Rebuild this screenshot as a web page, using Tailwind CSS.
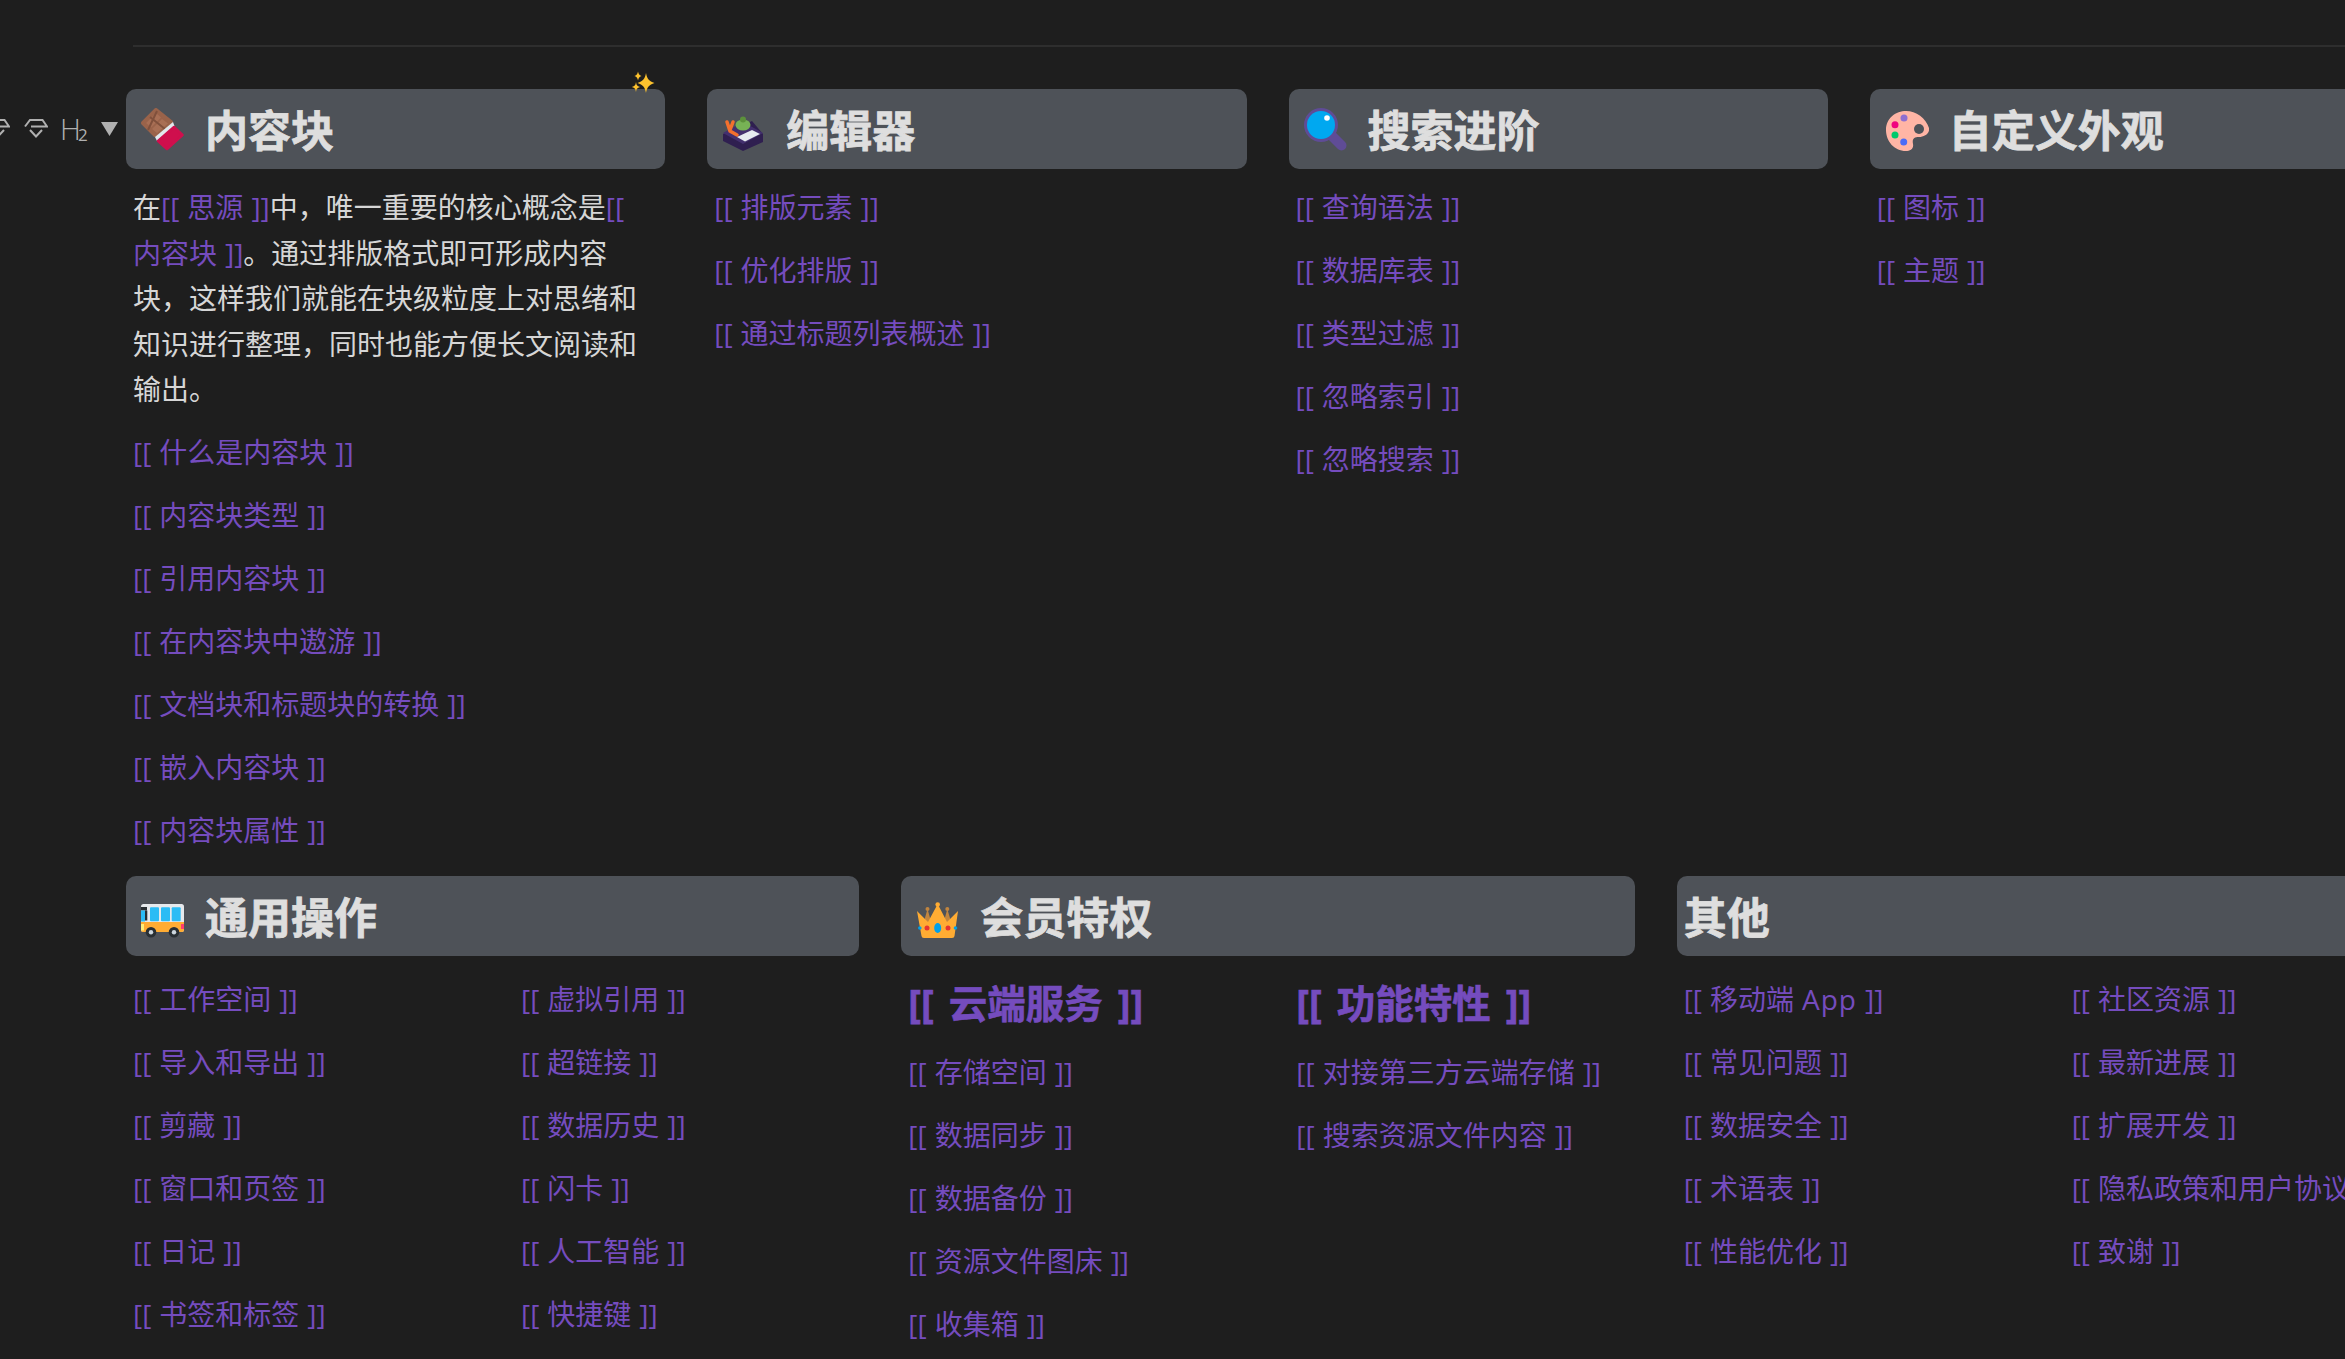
<!DOCTYPE html>
<html lang="zh-CN">
<head>
    <meta charset="UTF-8" />
    <title>思源笔记用户指南</title>
    <script src="https://cdn.jsdelivr.net/npm/@tailwindcss/browser@4"></script>
</head>
<body class="bg-[#1e1e1e]">
<div class="relative w-[2345px] h-[1359px] overflow-hidden bg-[#1e1e1e] text-[#d6d6d6] text-[28px] leading-[45.5px] whitespace-nowrap [word-spacing:0.75px] font-['Open_Sans','Noto_Sans_CJK_SC',sans-serif]">

    <!-- gutter next to the first heading -->
    <div class="absolute left-0 top-[118px] text-[#b0b0b0]">
        <svg class="absolute left-[-14px] top-[1px]" width="24" height="20" viewBox="0 0 24 20" fill="none" stroke="#b0b0b0" stroke-width="2"><path d="M1 7.5 L6 1 H18.5 L23 7.5 H7 M6 11 L12 17.5 L18 11"/></svg>
        <svg class="absolute left-[24px] top-[1px]" width="24" height="20" viewBox="0 0 24 20" fill="none" stroke="#b0b0b0" stroke-width="2"><path d="M1 7.5 L6 1 H18.5 L23 7.5 H7 M6 11 L12 17.5 L18 11"/></svg>
        <span class="absolute left-[60px] top-[-12px] text-[29px] font-light">H</span>
        <span class="absolute left-[78px] top-[-6px] text-[17px]">2</span>
        <svg class="absolute left-[101px] top-[4px]" width="17" height="14" viewBox="0 0 17 14"><polygon points="0,0 17,0 8.5,14" fill="#b0b0b0"/></svg>
    </div>

    <!-- sparkle sitting on the first heading -->
    <svg class="absolute left-[632px] top-[70px] z-10" width="24" height="28" viewBox="0 0 24 28" fill="#fdc22e">
        <path d="M14 3 C15 9 17 11 22.5 13 C17 15 15 17 14 23 C13 17 11 15 5.5 13 C11 11 13 9 14 3Z"/>
        <path d="M6 1.5 C6.5 4 7 5 9.5 6 C7 7 6.5 8 6 10.5 C5.5 8 5 7 2.5 6 C5 5 5.5 4 6 1.5Z"/>
        <path d="M4 12 C4.5 15 5 16 8 17 C5 18 4.5 19 4 22 C3.5 19 3 18 0 17 C3 16 3.5 15 4 12Z"/>
    </svg>

    <div class="ml-[126px] pt-[45px]">
        <div class="ml-[7px] h-[2px] bg-[#2e2e2e]"></div>

        <!-- first row: four columns -->
        <div class="w-[2283px] mt-[42px] grid grid-cols-4 gap-x-[42px]">
            <section>
                <h2 class="flex items-center h-[80px] rounded-[10px] bg-[#4e5258] text-[#dedede] text-[43px] font-bold">
                    <svg class="ml-[15px] mr-[21px] shrink-0" width="43" height="43" viewBox="0 0 43 43">
                        <polygon points="2,15 15,2 30,14 14,27" fill="#9a634a" stroke="#9a634a" stroke-width="4" stroke-linejoin="round"/>
                        <path d="M5 15 L15 5 L20 9.5 L10 19.5Z M11 21 L21 11 L27 15.5 L16 25Z" fill="#a86f55"/>
                        <path d="M9 9 L24 21 M16 3 L7 22" stroke="#80503c" stroke-width="2" fill="none"/>
                        <polygon points="14,29 32,14 33.5,18 16,33" fill="#e1e8ed"/>
                        <polygon points="17,33 33,19 41.5,27 26,41" fill="#cf0f4d" stroke="#cf0f4d" stroke-width="2.5" stroke-linejoin="round"/>
                    </svg>
                    <span class="mt-[4px] [-webkit-text-stroke:0.8px]">内容块</span>
                </h2>
                <div class="mt-[16px] px-[7px] space-y-[17.5px]">
                    <p>在<span class="text-[#754cbe]">[[ 思源 ]]</span>中，唯一重要的核心概念是<span class="text-[#754cbe]">[[<br>内容块 ]]</span>。通过排版格式即可形成内容<br>块，这样我们就能在块级粒度上对思绪和<br>知识进行整理，同时也能方便长文阅读和<br>输出。</p>
                    <p class="text-[#754cbe]">[[ 什么是内容块 ]]</p>
                    <p class="text-[#754cbe]">[[ 内容块类型 ]]</p>
                    <p class="text-[#754cbe]">[[ 引用内容块 ]]</p>
                    <p class="text-[#754cbe]">[[ 在内容块中遨游 ]]</p>
                    <p class="text-[#754cbe]">[[ 文档块和标题块的转换 ]]</p>
                    <p class="text-[#754cbe]">[[ 嵌入内容块 ]]</p>
                    <p class="text-[#754cbe]">[[ 内容块属性 ]]</p>
                </div>
            </section>

            <section>
                <h2 class="flex items-center h-[80px] rounded-[10px] bg-[#4e5258] text-[#dedede] text-[43px] font-bold">
                    <svg class="ml-[15px] mr-[21px] shrink-0" width="43" height="43" viewBox="0 0 43 43">
                        <polygon points="1,26 30,13 41,26 41,34 21,43 1,33" fill="#2f1f50"/>
                        <polygon points="1,25 21,14 41,25 21,36" fill="#43306e"/>
                        <ellipse cx="21" cy="17" rx="7.5" ry="5.5" fill="#77b255"/>
                        <circle cx="21" cy="11.5" r="3" fill="#5c913b"/>
                        <path d="M5 14 L8 23 L15 27 M11 14 L8 22" stroke="#f4702d" stroke-width="3.5" stroke-linecap="round" fill="none"/>
                        <polygon points="15,29 30,22 38,26 23,33.5" fill="#e6ebf0"/>
                    </svg>
                    <span class="mt-[4px] [-webkit-text-stroke:0.8px]">编辑器</span>
                </h2>
                <div class="mt-[16px] px-[7px] space-y-[17.5px] text-[#754cbe]">
                    <p>[[ 排版元素 ]]</p>
                    <p>[[ 优化排版 ]]</p>
                    <p>[[ 通过标题列表概述 ]]</p>
                </div>
            </section>

            <section>
                <h2 class="flex items-center h-[80px] rounded-[10px] bg-[#4e5258] text-[#dedede] text-[43px] font-bold">
                    <svg class="ml-[15px] mr-[21px] shrink-0" width="43" height="43" viewBox="0 0 43 43">
                        <line x1="28" y1="28" x2="37.5" y2="37.5" stroke="#5f4c96" stroke-width="10" stroke-linecap="round"/>
                        <circle cx="17" cy="17" r="17" fill="#5f4c96"/>
                        <circle cx="17" cy="17" r="14" fill="#00a8f0"/>
                        <circle cx="23" cy="10" r="2.8" fill="#ffffff"/>
                    </svg>
                    <span class="mt-[4px] [-webkit-text-stroke:0.8px]">搜索进阶</span>
                </h2>
                <div class="mt-[16px] px-[7px] space-y-[17.5px] text-[#754cbe]">
                    <p>[[ 查询语法 ]]</p>
                    <p>[[ 数据库表 ]]</p>
                    <p>[[ 类型过滤 ]]</p>
                    <p>[[ 忽略索引 ]]</p>
                    <p>[[ 忽略搜索 ]]</p>
                </div>
            </section>

            <section>
                <h2 class="flex items-center h-[80px] rounded-[10px] bg-[#4e5258] text-[#dedede] text-[43px] font-bold">
                    <svg class="ml-[16px] mr-[20px] shrink-0" width="43" height="43" viewBox="0 0 43 43">
                        <path d="M0 22 C0 10 10 3 20 3 C30 3 40 10 43 20 C44 26 38 29 33 29 C28 29 26 31 27 36 C28 41 24 43 20 43 C8 43 0 33 0 22Z" fill="#ffb5a5"/>
                        <circle cx="33" cy="21" r="5" fill="#4e5258"/>
                        <circle cx="18" cy="10" r="3.5" fill="#8e6fd0"/>
                        <circle cx="9" cy="16.7" r="3.5" fill="#f0047f"/>
                        <circle cx="9" cy="27" r="3.5" fill="#00c96b"/>
                        <circle cx="17.7" cy="34" r="3.5" fill="#4a6cf7"/>
                    </svg>
                    <span class="mt-[4px] [-webkit-text-stroke:0.8px]">自定义外观</span>
                </h2>
                <div class="mt-[16px] px-[7px] space-y-[17.5px] text-[#754cbe]">
                    <p>[[ 图标 ]]</p>
                    <p>[[ 主题 ]]</p>
                </div>
            </section>
        </div>

        <!-- second row: three columns, each split in two -->
        <div class="w-[2284px] mt-[22.5px] grid grid-cols-3 gap-x-[42px]">
            <section>
                <h2 class="flex items-center h-[80px] rounded-[10px] bg-[#4e5258] text-[#dedede] text-[43px] font-bold">
                    <svg class="ml-[15px] mr-[21px] shrink-0" width="43" height="43" viewBox="0 0 43 43">
                        <rect x="0" y="9" width="43" height="28" rx="2.5" fill="#e6e9ec"/>
                        <path d="M0 27 H43 V35 Q43 37 41 37 H2 Q0 37 0 35Z" fill="#ffac33"/>
                        <rect x="9" y="12.3" width="9" height="14" rx="1" fill="#2bbcf5"/>
                        <rect x="20" y="12.3" width="9" height="14" rx="1" fill="#2bbcf5"/>
                        <rect x="30.7" y="12.3" width="9" height="14" rx="1" fill="#2bbcf5"/>
                        <rect x="0" y="12" width="6" height="3.5" fill="#292f33"/>
                        <rect x="4" y="15.5" width="2.3" height="10" fill="#292f33"/>
                        <rect x="0" y="15.5" width="4" height="11" fill="#2bbcf5"/>
                        <rect x="0" y="29" width="3" height="6.5" fill="#ffee7a"/>
                        <rect x="40" y="29" width="3" height="5" fill="#ff3f6e"/>
                        <circle cx="10" cy="37.3" r="5.3" fill="#292f33"/>
                        <circle cx="10" cy="37.3" r="2.2" fill="#ccd6dd"/>
                        <circle cx="33" cy="37.3" r="5.3" fill="#292f33"/>
                        <circle cx="33" cy="37.3" r="2.2" fill="#ccd6dd"/>
                    </svg>
                    <span class="mt-[4px] [-webkit-text-stroke:0.8px]">通用操作</span>
                </h2>
                <div class="mt-[20.5px] pl-[7px] grid grid-cols-[388px_1fr] text-[#754cbe]">
                    <div class="space-y-[17.5px]">
                        <p>[[ 工作空间 ]]</p>
                        <p>[[ 导入和导出 ]]</p>
                        <p>[[ 剪藏 ]]</p>
                        <p>[[ 窗口和页签 ]]</p>
                        <p>[[ 日记 ]]</p>
                        <p>[[ 书签和标签 ]]</p>
                    </div>
                    <div class="space-y-[17.5px]">
                        <p>[[ 虚拟引用 ]]</p>
                        <p>[[ 超链接 ]]</p>
                        <p>[[ 数据历史 ]]</p>
                        <p>[[ 闪卡 ]]</p>
                        <p>[[ 人工智能 ]]</p>
                        <p>[[ 快捷键 ]]</p>
                    </div>
                </div>
            </section>

            <section>
                <h2 class="flex items-center h-[80px] rounded-[10px] bg-[#4e5258] text-[#dedede] text-[43px] font-bold">
                    <svg class="ml-[15px] mr-[21px] shrink-0" width="43" height="43" viewBox="0 0 43 43">
                        <path d="M11.5 14 L7 30 H16Z M31.3 14 L27 30 H36Z" fill="#c1853f"/>
                        <circle cx="11.5" cy="14" r="2" fill="#c1853f"/>
                        <circle cx="31.3" cy="14" r="2" fill="#c1853f"/>
                        <path d="M1 16 L12 27 L21.7 9 L31 27 L42 16 L38.5 41 Q38.3 43 36 43 H8 Q5.7 43 5.5 41Z" fill="#ffac33"/>
                        <circle cx="21.7" cy="9.5" r="2.3" fill="#ffac33"/>
                        <ellipse cx="21.7" cy="33" rx="3.5" ry="5" fill="#00a0e9"/>
                        <circle cx="11" cy="33" r="2.5" fill="#e8352f"/>
                        <circle cx="32" cy="33" r="2.5" fill="#e8352f"/>
                        <circle cx="3.8" cy="33" r="1.8" fill="#00a0e9"/>
                        <circle cx="39.5" cy="33" r="1.8" fill="#00a0e9"/>
                    </svg>
                    <span class="mt-[4px] [-webkit-text-stroke:0.8px]">会员特权</span>
                </h2>
                <div class="mt-[20px] pl-[7px] grid grid-cols-[388px_1fr] text-[#754cbe]">
                    <div class="space-y-[17.5px]">
                        <h3 class="h-[56px] leading-[55px] text-[38.5px] font-bold [word-spacing:5px] [-webkit-text-stroke:0.6px]">[[ 云端服务 ]]</h3>
                        <p>[[ 存储空间 ]]</p>
                        <p>[[ 数据同步 ]]</p>
                        <p>[[ 数据备份 ]]</p>
                        <p>[[ 资源文件图床 ]]</p>
                        <p>[[ 收集箱 ]]</p>
                    </div>
                    <div class="space-y-[17.5px]">
                        <h3 class="h-[56px] leading-[55px] text-[38.5px] font-bold [word-spacing:5px] [-webkit-text-stroke:0.6px]">[[ 功能特性 ]]</h3>
                        <p>[[ 对接第三方云端存储 ]]</p>
                        <p>[[ 搜索资源文件内容 ]]</p>
                    </div>
                </div>
            </section>

            <section>
                <h2 class="flex items-center h-[80px] rounded-[10px] bg-[#4e5258] text-[#dedede] text-[43px] font-bold pl-[7px]">
                    <span class="mt-[4px] [-webkit-text-stroke:0.8px]">其他</span>
                </h2>
                <div class="mt-[20.5px] pl-[7px] grid grid-cols-[388px_1fr] text-[#754cbe]">
                    <div class="space-y-[17.5px]">
                        <p>[[ 移动端 <span class="tracking-[1px]">App</span> ]]</p>
                        <p>[[ 常见问题 ]]</p>
                        <p>[[ 数据安全 ]]</p>
                        <p>[[ 术语表 ]]</p>
                        <p>[[ 性能优化 ]]</p>
                    </div>
                    <div class="space-y-[17.5px]">
                        <p>[[ 社区资源 ]]</p>
                        <p>[[ 最新进展 ]]</p>
                        <p>[[ 扩展开发 ]]</p>
                        <p>[[ 隐私政策和用户协议 ]]</p>
                        <p>[[ 致谢 ]]</p>
                    </div>
                </div>
            </section>
        </div>
    </div>
</div>
</body>
</html>
